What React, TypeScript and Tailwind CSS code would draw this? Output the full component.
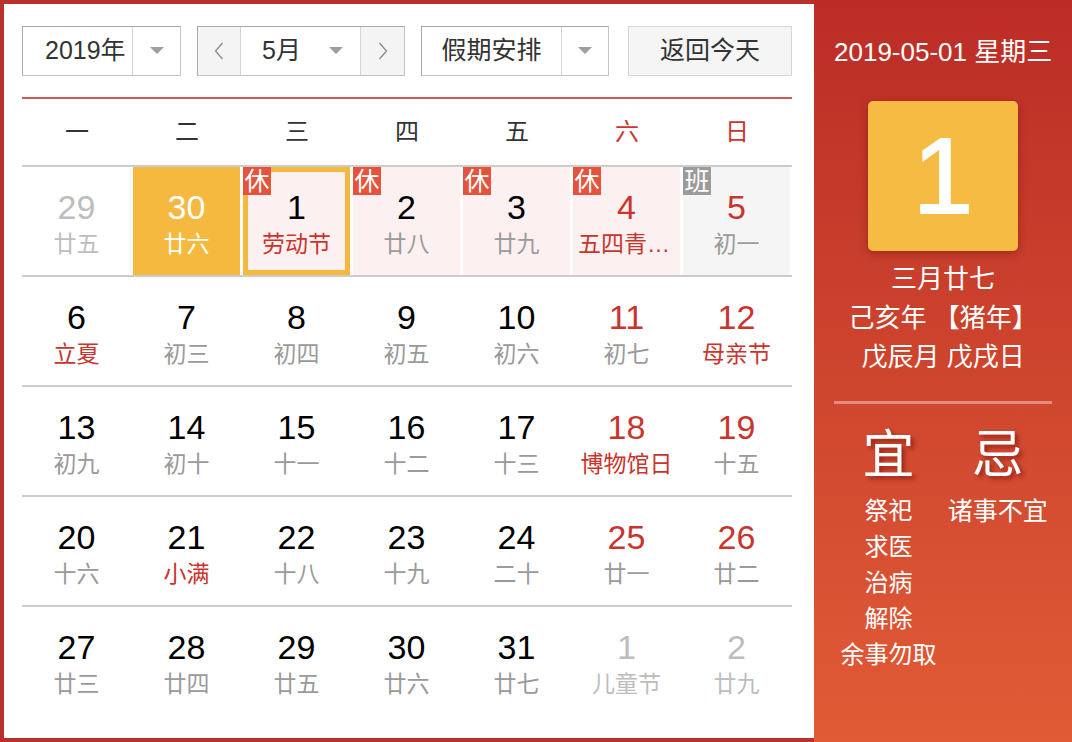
import React from "react";

type Cell = {
  d: string;
  l: string;
  numColor: string;
  lunarColor: string;
  bg?: string;
  badge?: "休" | "班";
  selected?: boolean;
  today?: boolean;
};

const BLACK = "text-black";
const RED = "text-[#c9352e]";
const GRAY = "text-[#9a9a9a]";
const LIGHT = "text-[#bdbdbd]";

const rows: Cell[][] = [
  [
    { d: "29", l: "廿五", numColor: LIGHT, lunarColor: LIGHT },
    { d: "30", l: "廿六", numColor: "text-white", lunarColor: "text-white", today: true },
    { d: "1", l: "劳动节", numColor: BLACK, lunarColor: RED, badge: "休", selected: true },
    { d: "2", l: "廿八", numColor: BLACK, lunarColor: GRAY, badge: "休", bg: "bg-[#fdf0f0]" },
    { d: "3", l: "廿九", numColor: BLACK, lunarColor: GRAY, badge: "休", bg: "bg-[#fdf0f0]" },
    { d: "4", l: "五四青年节", numColor: RED, lunarColor: RED, badge: "休", bg: "bg-[#fdf0f0]" },
    { d: "5", l: "初一", numColor: RED, lunarColor: GRAY, badge: "班", bg: "bg-[#f5f5f5]" },
  ],
  [
    { d: "6", l: "立夏", numColor: BLACK, lunarColor: RED },
    { d: "7", l: "初三", numColor: BLACK, lunarColor: GRAY },
    { d: "8", l: "初四", numColor: BLACK, lunarColor: GRAY },
    { d: "9", l: "初五", numColor: BLACK, lunarColor: GRAY },
    { d: "10", l: "初六", numColor: BLACK, lunarColor: GRAY },
    { d: "11", l: "初七", numColor: RED, lunarColor: GRAY },
    { d: "12", l: "母亲节", numColor: RED, lunarColor: RED },
  ],
  [
    { d: "13", l: "初九", numColor: BLACK, lunarColor: GRAY },
    { d: "14", l: "初十", numColor: BLACK, lunarColor: GRAY },
    { d: "15", l: "十一", numColor: BLACK, lunarColor: GRAY },
    { d: "16", l: "十二", numColor: BLACK, lunarColor: GRAY },
    { d: "17", l: "十三", numColor: BLACK, lunarColor: GRAY },
    { d: "18", l: "博物馆日", numColor: RED, lunarColor: RED },
    { d: "19", l: "十五", numColor: RED, lunarColor: GRAY },
  ],
  [
    { d: "20", l: "十六", numColor: BLACK, lunarColor: GRAY },
    { d: "21", l: "小满", numColor: BLACK, lunarColor: RED },
    { d: "22", l: "十八", numColor: BLACK, lunarColor: GRAY },
    { d: "23", l: "十九", numColor: BLACK, lunarColor: GRAY },
    { d: "24", l: "二十", numColor: BLACK, lunarColor: GRAY },
    { d: "25", l: "廿一", numColor: RED, lunarColor: GRAY },
    { d: "26", l: "廿二", numColor: RED, lunarColor: GRAY },
  ],
  [
    { d: "27", l: "廿三", numColor: BLACK, lunarColor: GRAY },
    { d: "28", l: "廿四", numColor: BLACK, lunarColor: GRAY },
    { d: "29", l: "廿五", numColor: BLACK, lunarColor: GRAY },
    { d: "30", l: "廿六", numColor: BLACK, lunarColor: GRAY },
    { d: "31", l: "廿七", numColor: BLACK, lunarColor: GRAY },
    { d: "1", l: "儿童节", numColor: LIGHT, lunarColor: LIGHT },
    { d: "2", l: "廿九", numColor: LIGHT, lunarColor: LIGHT },
  ],
];

const Tri = () => (
  <svg width="14" height="8" viewBox="0 0 14 8">
    <path d="M0 0 L14 0 L7 7 Z" fill="#9e9e9e" />
  </svg>
);

const Chevron = ({ dir }: { dir: "l" | "r" }) => (
  <svg width="10" height="18" viewBox="0 0 10 18">
    <path
      d={dir === "l" ? "M8.5 1 L1.5 9 L8.5 17" : "M1.5 1 L8.5 9 L1.5 17"}
      fill="none"
      stroke="#8a8a8a"
      strokeWidth="1.3"
    />
  </svg>
);

function DayCell({ c }: { c: Cell }) {
  const base = c.today
    ? "bg-[#f5b940]"
    : c.selected
    ? "bg-[#fdf0f0] border-[5px] border-[#f5b940]"
    : c.bg ?? "";
  return (
    <div className="pl-px pr-[2px] h-[108px]">
      <div className={`relative h-full ${base} flex flex-col items-center box-border`}>
        {c.badge && (
          <div
            className={`absolute ${c.selected ? "-top-[5px] -left-[5px]" : "top-0 left-0"} w-[28px] h-[28px] leading-[28px] text-[25px] text-white text-center overflow-hidden ${
              c.badge === "休" ? "bg-[#e5533c]" : "bg-[#9b9b9b]"
            }`}
          >
            {c.badge}
          </div>
        )}
        <div
          className={`${c.selected ? "pt-[17px]" : "pt-[22px]"} text-[34px] leading-[36px] ${c.numColor}`}
        >
          {c.d}
        </div>
        <div
          className={`w-full px-[5px] text-center text-[23px] leading-[38px] truncate ${c.lunarColor}`}
        >
          {c.l}
        </div>
      </div>
    </div>
  );
}

export default function App() {
  const font = { fontFamily: '"Liberation Sans", Arial, "Noto Sans CJK SC", sans-serif' };
  return (
    <div className="w-[1072px] h-[742px] flex" style={font}>
      <div className="w-[814px] h-full bg-white border-[4px] border-r-0 border-[#b9312b] pl-[18px] pr-[22px] pt-[22px]">
        {/* controls */}
        <div className="flex h-[50px] text-[25px] text-[#333]">
          <div className="w-[159px] h-full flex border border-[#c4c4c4] border-l-[#a8a8a8] border-t-[#a8a8a8]">
            <div className="flex-1 flex items-center pl-[22px]">2019年</div>
            <div className="w-[48px] border-l border-[#d4d4d4] flex items-center justify-center">
              <Tri />
            </div>
          </div>
          <div className="ml-[16px] w-[208px] h-full flex border border-[#c4c4c4] border-l-[#a8a8a8] border-t-[#a8a8a8]">
            <div className="w-[43px] bg-[#f4f4f4] border-r border-[#d4d4d4] flex items-center justify-center">
              <Chevron dir="l" />
            </div>
            <div className="flex-1 flex items-center">
              <span className="ml-[21px]">5月</span>
              <span className="ml-[28px] flex"><Tri /></span>
            </div>
            <div className="w-[44px] bg-[#f4f4f4] border-l border-[#d4d4d4] flex items-center justify-center">
              <Chevron dir="r" />
            </div>
          </div>
          <div className="ml-[16px] w-[188px] h-full flex border border-[#c4c4c4] border-l-[#a8a8a8] border-t-[#a8a8a8]">
            <div className="flex-1 flex items-center justify-center">假期安排</div>
            <div className="w-[47px] border-l border-[#d4d4d4] flex items-center justify-center">
              <Tri />
            </div>
          </div>
          <div className="ml-[19px] w-[164px] h-full flex items-center justify-center bg-[#f5f5f5] border border-[#d6d6d6]">
            返回今天
          </div>
        </div>
        <div className="mt-[21px] h-[2px] bg-[#cf5a50]" />
        {/* week header */}
        <div className="grid grid-cols-7 h-[66px] items-center text-[24px]">
          {["一", "二", "三", "四", "五", "六", "日"].map((w, i) => (
            <div key={w} className={`text-center ${i >= 5 ? "text-[#c9352e]" : "text-[#333]"}`}>
              {w}
            </div>
          ))}
        </div>
        {rows.map((r, ri) => (
          <div key={ri} className="border-t-2 border-[#cccccc] grid grid-cols-7">
            {r.map((c, ci) => (
              <DayCell key={ci} c={c} />
            ))}
          </div>
        ))}
      </div>
      <div className="flex-1 h-full bg-gradient-to-b from-[#bb2c26] to-[#e15b36] text-white flex flex-col items-center pt-[36px] px-[20px]">
        <div className="text-[26px] leading-[32px] whitespace-nowrap">2019-05-01 星期三</div>
        <div className="mt-[33px] w-[150px] h-[150px] rounded-[5px] bg-[#f6bb42] shadow-[0_2px_8px_rgba(80,0,0,0.35)] flex items-center justify-center">
          <span className="text-[108px] leading-none [-webkit-text-stroke:2px_white]">1</span>
        </div>
        <div className="mt-[9px] text-[26px] leading-[39px] text-center">
          <div>三月廿七</div>
          <div className="whitespace-nowrap">己亥年 【猪年】</div>
          <div>戊辰月 戊戌日</div>
        </div>
        <div className="mt-[24px] w-full h-[3px] bg-[#e58a7c]" />
        <div className="mt-[23px] w-full grid grid-cols-2">
          <div className="flex flex-col items-center">
            <div className="text-[52px] leading-[56px] [text-shadow:3px_3px_4px_rgba(90,0,0,0.5)]">宜</div>
            <div className="mt-[10px] text-[24px] leading-[36px] text-center">
              <div>祭祀</div>
              <div>求医</div>
              <div>治病</div>
              <div>解除</div>
              <div className="whitespace-nowrap">余事勿取</div>
            </div>
          </div>
          <div className="flex flex-col items-center">
            <div className="text-[52px] leading-[56px] [text-shadow:3px_3px_4px_rgba(90,0,0,0.5)]">忌</div>
            <div className="mt-[10px] text-[25px] leading-[36px] text-center whitespace-nowrap">
              <div>诸事不宜</div>
            </div>
          </div>
        </div>
      </div>
    </div>
  );
}
